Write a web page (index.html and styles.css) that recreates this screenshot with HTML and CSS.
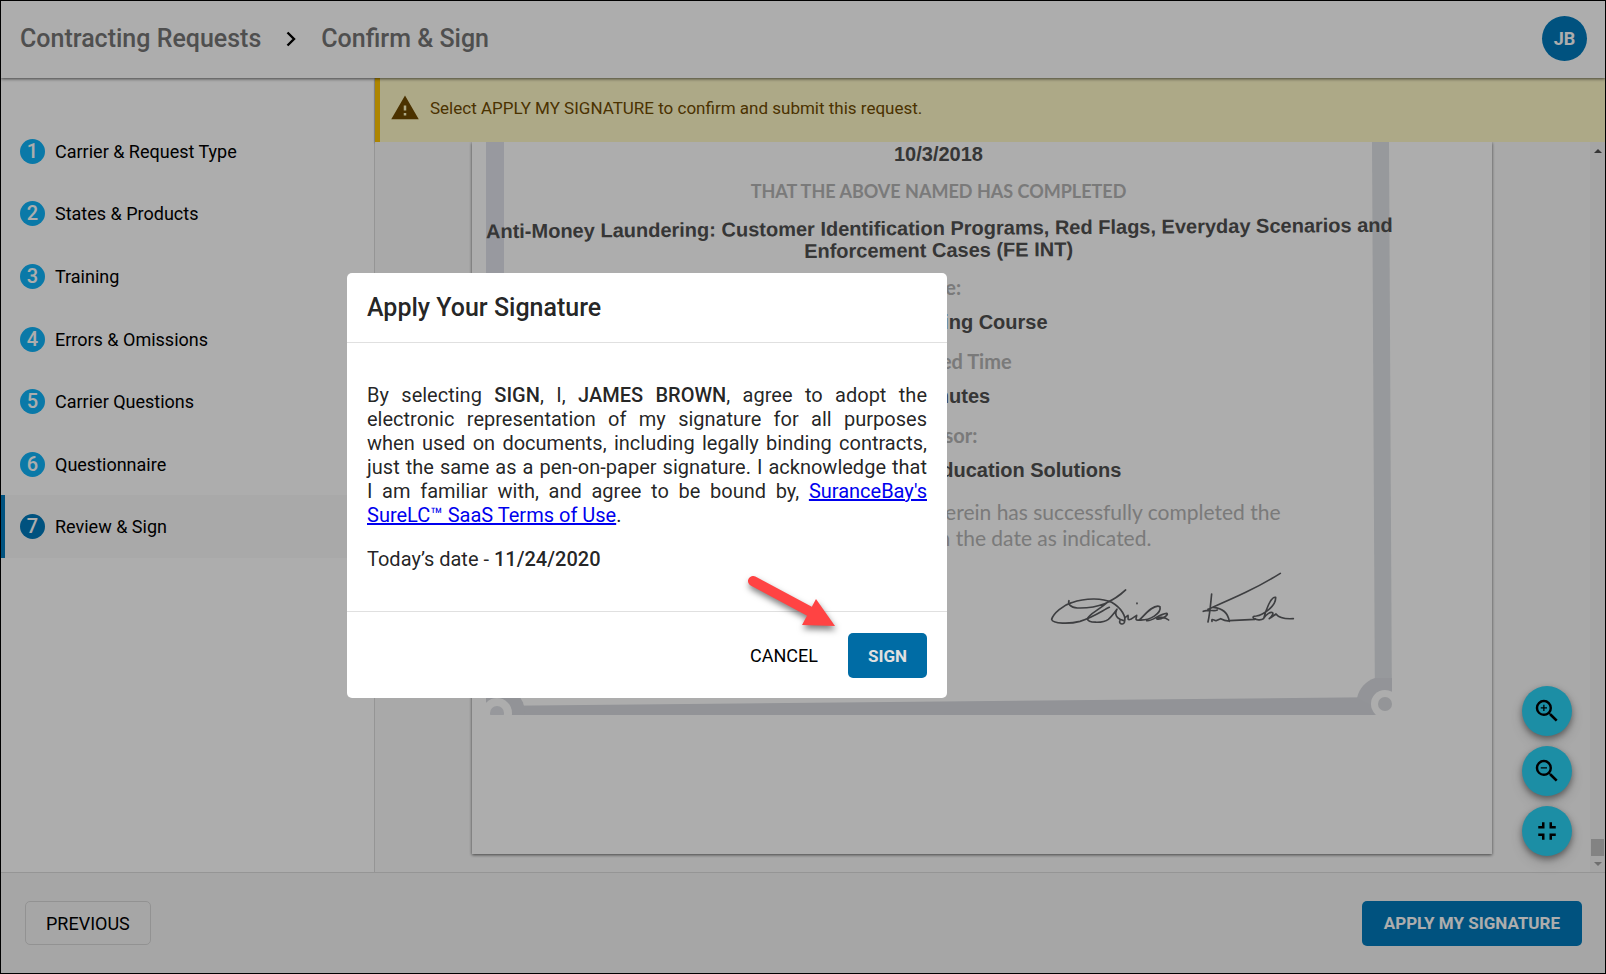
FILE: index.html
```html
<!DOCTYPE html>
<html lang="en">
<head>
    <meta charset="UTF-8">
    <meta name="viewport" content="width=device-width, initial-scale=1.0">
    <title>Confirm &amp; Sign</title>
    <link rel="stylesheet" href="styles.css">
</head>
<body>
    <header class="topbar">
        <nav class="breadcrumb">
            <a href="#">Contracting Requests</a>
            <svg class="chevron" viewBox="0 0 10 16" width="10" height="16"><path d="M1.5 1.5 8 8l-6.5 6.5" fill="none" stroke="currentColor" stroke-width="2.4"/></svg>
            <a href="#">Confirm &amp; Sign</a>
        </nav>
        <button class="avatar" type="button">JB</button>
    </header>

    <div class="workspace">
        <nav class="sidebar">
            <ol class="steps">
                <li><a class="step" href="#"><span class="step-number">1</span>Carrier &amp; Request Type</a></li>
                <li><a class="step" href="#"><span class="step-number">2</span>States &amp; Products</a></li>
                <li><a class="step" href="#"><span class="step-number">3</span>Training</a></li>
                <li><a class="step" href="#"><span class="step-number">4</span>Errors &amp; Omissions</a></li>
                <li><a class="step" href="#"><span class="step-number">5</span>Carrier Questions</a></li>
                <li><a class="step" href="#"><span class="step-number">6</span>Questionnaire</a></li>
                <li><a class="step active" href="#"><span class="step-number">7</span>Review &amp; Sign</a></li>
            </ol>
        </nav>

        <main class="content">
            <div class="banner">
                <svg viewBox="0 0 24 24" width="30" height="30"><path d="M1 21h22L12 2 1 21zm12-3h-2v-2h2v2zm0-4h-2v-4h2v4z" fill="currentColor"/></svg>
                <p>Select APPLY MY SIGNATURE to confirm and submit this request.</p>
            </div>

            <div class="viewer">
                <div class="pages">
                    <article class="page">
                        <div class="certificate">
                            <svg class="cert-frame" viewBox="0 0 906 573" width="906" height="573">
                                <path d="M0 0h18v573H0z" fill="#e0e2ea"/>
                                <path d="M886 0h17l3 573h-17z" fill="#dfe2e6"/>
                                <path d="M0 564 906 555v18H0z" fill="#d7d9df"/>
                                <circle cx="11" cy="571" r="28" fill="#d7d9df"/>
                                <circle cx="11" cy="571" r="15" fill="#fff"/>
                                <circle cx="11" cy="571" r="7" fill="#dfe1e6"/>
                                <path d="M889 536a27 27 0 0 0-18 20l35 17v-37z" fill="#d9dbe0"/>
                                <circle cx="899" cy="562" r="14" fill="#fff"/>
                                <path d="M888 573h18v-3z" fill="#fff"/>
                                <circle cx="899" cy="562" r="7" fill="#dadce0"/>
                                <!-- signature -->
                                <g transform="translate(494 418) scale(0.3333)" fill="none" stroke="#5c5d61" stroke-width="5" stroke-linecap="round" stroke-linejoin="round">
                                    <path d="M267 122c-4 10 4 20 25 22 60 2 110-20 145-54-17 15-32 28-52 35-35 30-55 35-62 50-5 15 47 15 62 3 15-13 30-38 25-28-10 20 10 30 22 32"/>
                                    <path d="M388 142c-18 8-48 30-88 42-30 8-82 8-85-6 5-18 35-43 60-50 45-16 95-13 120-1 30 18 45 43 38 61-5 8-18 2-13-6"/>
                                    <path d="M436 172l8-6c2 8-4 16 8 12l18-12c0 8-8 16 8 14 12-10 42-50 62-40 5 20-30 42-62 40M500 182c20 2 35-20 60-22 10 4-20 22-30 16 5-6 25-6 36 4M471 129v2"/>
                                    <path d="M695 102c-3 28-5 58-11 84M670 154c20-8 30 2 42-4M684 148c76-33 146-63 217-108M700 142c35 3 45 23 48 42M696 184c-2-10 4-4 12-2l14-6c8 4 20 8 26 6l77-4c-10-6-6-10 4-10 20-2 60-30 58-56-14-4-30 40-36 64-8 6-22 4-26 0M850 176c10-14 22-22 28-18 4 6-6 14-10 18l20-14c6 8 20 16 52 14"/>
                                </g>
                            </svg>
                            <div class="cert-text">
                                <p class="cert-value">10/3/2018</p>
                                <p class="cert-label cert-caps">THAT THE ABOVE NAMED HAS COMPLETED</p>
                                <p class="cert-value cert-course">Anti-Money Laundering: Customer Identification Programs, Red Flags, Everyday Scenarios and<br>Enforcement Cases (FE INT)</p>
                                <div class="cert-fields">
                                    <div class="cert-field">
                                        <p class="cert-label">Title:</p>
                                        <p class="cert-value">FINRA Training Course</p>
                                    </div>
                                    <div class="cert-field">
                                        <p class="cert-label">Completed Time</p>
                                        <p class="cert-value">45 Minutes</p>
                                    </div>
                                    <div class="cert-field">
                                        <p class="cert-label">Sponsor:</p>
                                        <p class="cert-value">Professional CPE Education Solutions</p>
                                    </div>
                                    <p class="cert-note">This certifies that the person named herein has successfully completed the<br>course of study given on the date as indicated.</p>
                                </div>
                            </div>
                        </div>
                    </article>
                </div>

                <div class="zoom-tools">
                    <button class="fab" type="button" aria-label="Zoom in">
                        <svg viewBox="0 0 24 24" width="30" height="30"><path d="M15.5 14h-.79l-.28-.27A6.471 6.471 0 0 0 16 9.5 6.5 6.5 0 1 0 9.5 16c1.61 0 3.09-.59 4.23-1.57l.27.28v.79l5 4.99L20.49 19l-4.99-5zm-6 0C7.01 14 5 11.99 5 9.5S7.01 5 9.5 5 14 7.01 14 9.5 11.99 14 9.5 14zM12 10h-2v2H9v-2H7V9h2V7h1v2h2v1z"/></svg>
                    </button>
                    <button class="fab" type="button" aria-label="Zoom out">
                        <svg viewBox="0 0 24 24" width="30" height="30"><path d="M15.5 14h-.79l-.28-.27A6.471 6.471 0 0 0 16 9.5 6.5 6.5 0 1 0 9.5 16c1.61 0 3.09-.59 4.23-1.57l.27.28v.79l5 4.99L20.49 19l-4.99-5zm-6 0C7.01 14 5 11.99 5 9.5S7.01 5 9.5 5 14 7.01 14 9.5 11.99 14 9.5 14zM7 9h5v1H7z"/></svg>
                    </button>
                    <button class="fab" type="button" aria-label="Fit page">
                        <svg viewBox="0 0 24 24" width="30" height="30"><path d="M5 16h3v3h2v-5H5v2zm3-8H5v2h5V5H8v3zm6 11h2v-3h3v-2h-5v5zm2-11V5h-2v5h5V8h-3z"/></svg>
                    </button>
                </div>

                <div class="scrollbar">
                    <svg viewBox="0 0 8 4" width="8" height="4"><path d="M4 0l4 4H0z" fill="#505050"/></svg>
                    <div class="scroll-thumb"></div>
                    <svg viewBox="0 0 8 4" width="8" height="4"><path d="M0 0h8L4 4z" fill="#a3a3a3"/></svg>
                </div>
            </div>
        </main>
    </div>

    <footer class="actions">
        <button class="btn btn-outline" type="button">PREVIOUS</button>
        <button class="btn btn-primary" type="button">APPLY MY SIGNATURE</button>
    </footer>

    <div class="overlay">
        <section class="dialog" role="dialog" aria-labelledby="dialog-title">
            <h2 class="dialog-title" id="dialog-title">Apply Your Signature</h2>
            <div class="dialog-body">
                <p class="agreement">By selecting <strong>SIGN</strong>, I, <strong>JAMES BROWN</strong>, agree to adopt the electronic representation of my signature for all purposes when used on documents, including legally binding contracts, just the same as a pen-on-paper signature. I acknowledge that I am familiar with, and agree to be bound by, <a href="#">SuranceBay's SureLC™ SaaS Terms of Use</a>.</p>
                <p>Today’s date - <strong>11/24/2020</strong></p>
            </div>
            <div class="dialog-actions">
                <button class="btn btn-text" type="button">CANCEL</button>
                <button class="btn btn-primary btn-sign" type="button">SIGN</button>
            </div>
            <svg class="pointer" viewBox="0 0 100 64" width="100" height="64">
                <path d="M12 12 68 42" stroke="#ff4343" stroke-width="10" stroke-linecap="round"/>
                <path d="M75 30 94 57l-33-1z" fill="#ff4343"/>
            </svg>
        </section>
    </div>
</body>
</html>
```
FILE: styles.css
```css
* {
    box-sizing: border-box;
}

body {
    margin: 0;
    height: 100vh;
    display: flex;
    flex-direction: column;
    overflow: hidden;
    border: 1px solid #000;
    background: #fff;
    font-family: Roboto, sans-serif;
    font-size: 18px;
    color: rgba(0, 0, 0, 0.87);
}

p, h2 {
    margin: 0;
}

button {
    font-family: inherit;
    cursor: pointer;
}

/* Top bar */
.topbar {
    position: relative;
    z-index: 1;
    display: flex;
    align-items: center;
    justify-content: space-between;
    height: 77px;
    padding: 0 18px 2px 19px;
    background: #fff;
    box-shadow: 0 1px 3px rgba(0, 0, 0, 0.6);
}

.breadcrumb {
    display: flex;
    align-items: center;
    gap: 25px;
    font-size: 25px;
    font-weight: 500;
    color: #000;
}

.breadcrumb a {
    color: #757575;
    text-decoration: none;
}

.avatar {
    width: 45px;
    height: 45px;
    padding: 0;
    border: 0;
    border-radius: 50%;
    background: #007abc;
    color: #fff;
    font-size: 18px;
    font-weight: 700;
}

/* Main area */
.workspace {
    flex: 1;
    display: flex;
    min-height: 0;
}

.sidebar {
    width: 374px;
    padding-top: 42px;
    border-right: 1px solid #dcdcdc;
}

.steps {
    display: flex;
    flex-direction: column;
    height: 438px;
    margin: 0;
    padding: 0;
    list-style: none;
}

.steps li {
    flex: 1;
    display: flex;
}

.step {
    flex: 1;
    display: flex;
    align-items: center;
    gap: 10px;
    padding-left: 15px;
    border-left: 4px solid transparent;
    color: #000;
    text-decoration: none;
}

.step.active {
    border-left-color: #007abc;
    background: #fafafa;
}

.step-number {
    width: 25px;
    height: 25px;
    border-radius: 50%;
    background: #10b3f8;
    color: #fff;
    font-size: 20px;
    font-weight: 500;
    line-height: 25px;
    text-align: center;
}

.step.active .step-number {
    background: #007abc;
}

.content {
    flex: 1;
    display: flex;
    flex-direction: column;
    min-width: 0;
}

.banner {
    position: relative;
    display: flex;
    align-items: center;
    gap: 10px;
    height: 64px;
    padding-left: 10px;
    padding-bottom: 4px;
    border-left: 5px solid #ffc400;
    background: #fff9c8;
    color: #6f4b00;
    font-size: 17px;
    box-shadow: 0 1px 2px rgba(0, 0, 0, 0.4);
}

/* Document viewer */
.viewer {
    position: relative;
    flex: 1;
    display: flex;
    min-height: 0;
    background: #fafafa;
}

.pages {
    flex: 1;
    display: flex;
    padding: 0 98px 18px 97px;
    overflow: hidden;
}

.page {
    flex: 1;
    padding: 0 14px;
    background: #fff;
    box-shadow: 0 1px 3px rgba(0, 0, 0, 0.6);
}

.certificate {
    position: relative;
    width: 905px;
    min-height: 573px;
}

.cert-frame {
    position: absolute;
    top: 0;
    left: 0;
}

.cert-text {
    position: relative;
    display: flex;
    flex-direction: column;
    gap: 16px;
    padding-top: 1px;
    text-align: center;
    white-space: nowrap;
}

.cert-fields {
    display: flex;
    flex-direction: column;
    gap: 18px;
}

.cert-field {
    display: flex;
    flex-direction: column;
    gap: 14px;
}

.cert-value {
    color: #505050;
    font-family: "Liberation Sans", sans-serif;
    font-size: 20px;
    font-weight: 700;
    line-height: 22px;
}

.cert-course {
    transform: rotate(-0.4deg);
}

.cert-label,
.cert-note {
    color: #b4b4b4;
    font-family: Lato, sans-serif;
    font-size: 20px;
    line-height: 20px;
}

.cert-label {
    font-weight: 700;
}

.cert-caps {
    font-size: 18px;
}

.cert-note {
    font-size: 21px;
    line-height: 26px;
}

.zoom-tools {
    position: absolute;
    right: 33px;
    bottom: 16px;
    display: flex;
    flex-direction: column;
    gap: 10px;
}

.fab {
    display: flex;
    align-items: center;
    justify-content: center;
    width: 50px;
    height: 50px;
    padding: 0;
    border: 0;
    border-radius: 50%;
    background: #2ad1f3;
    box-shadow: 0 3px 6px rgba(0, 0, 0, 0.4), 0 6px 16px rgba(0, 0, 0, 0.14);
}

.scrollbar {
    display: flex;
    flex-direction: column;
    align-items: center;
    gap: 6px;
    width: 15px;
    padding: 7px 0 6px;
    background: #f3f3f3;
}

.scroll-thumb {
    width: 13px;
    height: 17px;
    margin-top: auto;
    background: #c1c1c1;
}

/* Bottom bar */
.actions {
    display: flex;
    align-items: center;
    justify-content: space-between;
    height: 101px;
    padding: 0 23px 0 24px;
    border-top: 1px solid #dcdcdc;
    background: #f5f5f5;
}

.btn {
    height: 45px;
    padding: 0 20px;
    border: 0;
    border-radius: 5px;
    font-size: 18px;
}

.btn-outline {
    height: 44px;
    border: 1px solid #d8d8d8;
    background: transparent;
    color: #000;
}

.btn-primary {
    padding: 0 22px;
    background: #007abc;
    color: #fff;
    font-size: 17px;
    font-weight: 700;
}

.btn-text {
    background: transparent;
    color: #000;
}

.btn-sign {
    padding: 0 20px;
    background: #006ca5;
    color: #e0e0e0;
}

/* Signature dialog */
.overlay {
    position: fixed;
    inset: 1px;
    z-index: 2;
    display: flex;
    align-items: center;
    justify-content: center;
    padding: 0 312px 3px 0;
    background: rgba(0, 0, 0, 0.32);
}

.dialog {
    position: relative;
    width: 600px;
    border-radius: 5px;
    background: #fff;
}

.dialog-title {
    padding: 20px 20px 19px;
    border-bottom: 1px solid #e0e0e0;
    font-size: 25px;
    font-weight: 500;
    line-height: 30px;
}

.dialog-body {
    display: flex;
    flex-direction: column;
    gap: 20px;
    padding: 40px 20px;
    font-size: 20px;
    line-height: 24px;
}

.agreement {
    text-align: justify;
}

.dialog strong {
    font-weight: 500;
}

.dialog a {
    color: #0000ee;
}

.dialog-actions {
    display: flex;
    justify-content: flex-end;
    gap: 10px;
    padding: 21px 20px 20px;
    border-top: 1px solid #e0e0e0;
}

/* Arrow pointing at the SIGN button */
.pointer {
    position: absolute;
    right: 106px;
    bottom: 65px;
    fill: none;
    filter: drop-shadow(1px 4px 3px rgba(0, 0, 0, 0.5));
    pointer-events: none;
}
```
